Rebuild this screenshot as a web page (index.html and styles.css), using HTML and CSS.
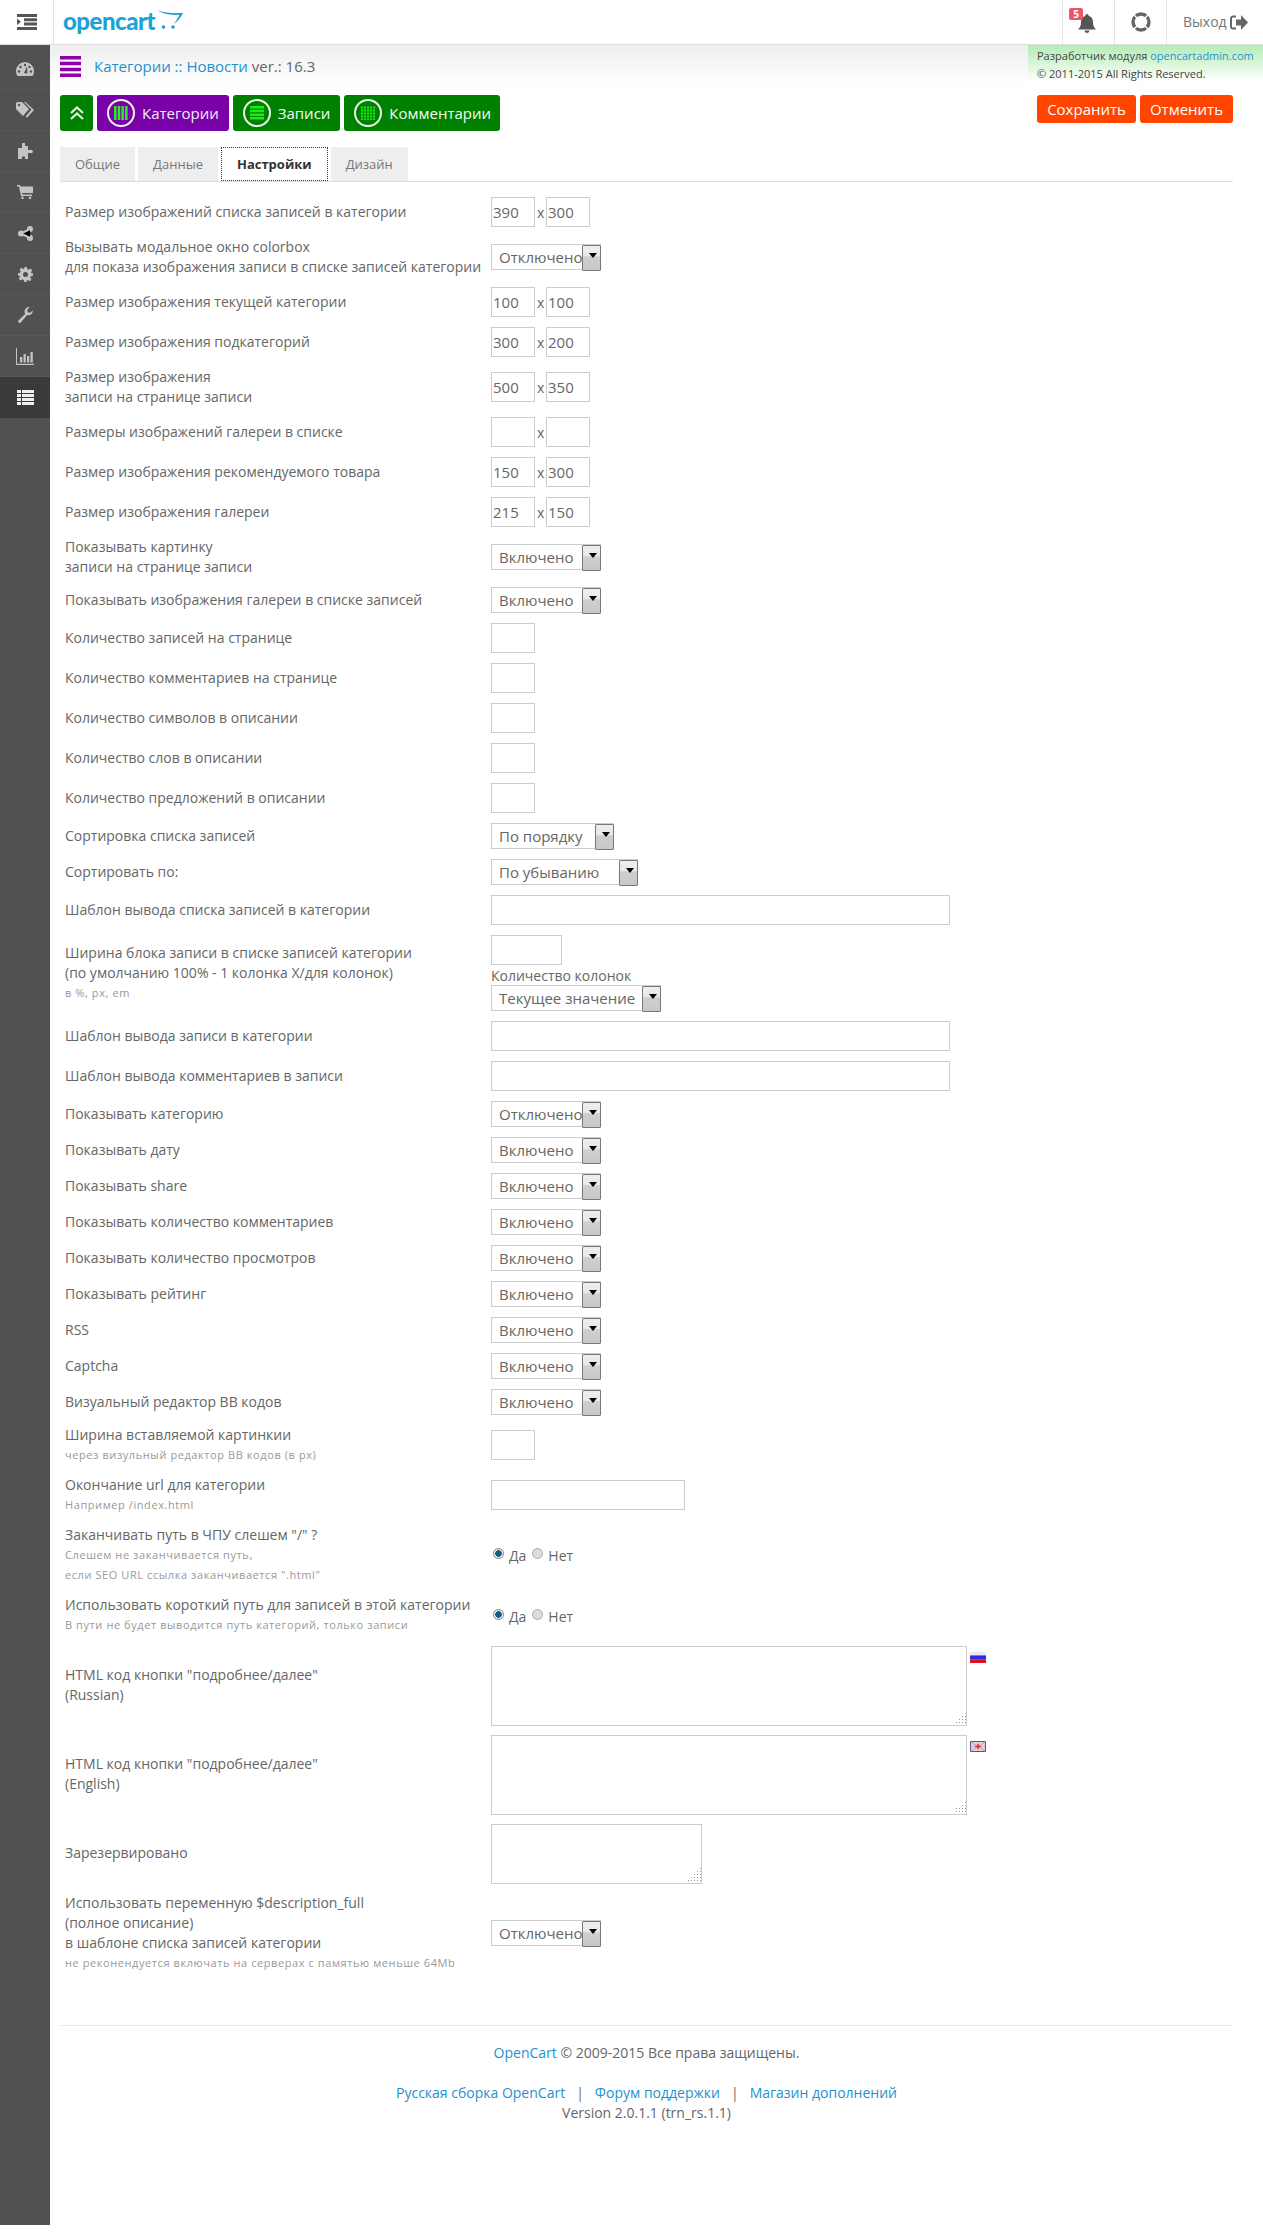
FILE: index.html
```html
<!DOCTYPE html>
<html lang="ru">
<head>
<meta charset="utf-8">
<title>Категории</title>
<link rel="stylesheet" href="styles.css">
</head>
<body>
<header class="topbar">
  <div class="burger">
    <svg width="20" height="16" viewBox="0 0 20 16"><path fill="#555" d="M0 0h20v3H0zM7 4.300h13v3H7zM7 8.600h13v3H7zM0 13h20v3H0zM0 4.500l4 3.300-4 3.300z"/></svg>
  </div>
  <div class="logo">
    <span class="logo-text">opencart</span>
    <svg class="logo-cart" width="26" height="20" viewBox="0 0 26 20"><path fill="#1b9fd1" d="M0 1c7 3 16 3.500 26 3-2 4-5 8-9 11 2-3 4-6 5.500-9.300C14 6.500 6 5 0 1z"/><circle cx="6.500" cy="18" r="1.800" fill="#1b9fd1"/><circle cx="16" cy="18" r="1.800" fill="#1b9fd1"/></svg>
  </div>
  <nav class="top-actions">
    <div class="top-item top-bell">
      <span class="badge">5</span>
      <svg width="18" height="19" viewBox="0 0 18 19"><path fill="#555" d="M9 0a1.600 1.600 0 0 1 1.600 1.700C13.500 2.500 15 5 15 8c0 4 1 5.500 3 7.500H0C2 13.500 3 12 3 8c0-3 1.500-5.500 4.400-6.300A1.600 1.600 0 0 1 9 0zM6.500 16.500h5a2.500 2.500 0 0 1-5 0z"/></svg>
    </div>
    <div class="top-item top-help">
      <svg width="20" height="20" viewBox="0 0 20 20"><circle cx="10" cy="10" r="8" fill="none" stroke="#666" stroke-width="3.400"/><path stroke="#fff" stroke-width="1.300" d="M2.800 2.800l4 4M17.200 2.800l-4 4M2.800 17.200l4-4M17.200 17.200l-4-4"/></svg>
    </div>
    <div class="top-item top-exit">
      <span>Выход</span>
      <svg width="18" height="15" viewBox="0 0 18 15"><path fill="none" stroke="#666" stroke-width="2" d="M6 1.500H3a2 2 0 0 0-2 2v8a2 2 0 0 0 2 2h3"/><path fill="#666" d="M11 0l7 7.500-7 7.500v-4.500H6v-6h5z"/></svg>
    </div>
  </nav>
</header>
<div class="layout">
  <aside class="sidebar">
    <div class="side-item"><svg width="18" height="14" viewBox="0 0 18 14"><path fill="currentColor" d="M9 0a9 9 0 0 1 9 9c0 2-.6 3.700-1.500 5h-15A8.800 8.800 0 0 1 0 9a9 9 0 0 1 9-9z"/><g fill="#515151"><circle cx="9" cy="3" r="1.200"/><circle cx="4.500" cy="5" r="1.200"/><circle cx="13.500" cy="5" r="1.200"/><circle cx="3" cy="9.500" r="1.200"/><circle cx="15" cy="9.500" r="1.200"/><path d="M8 11l3-6.500 .5 7z"/></g></svg></div>
    <div class="side-item"><svg width="18" height="16" viewBox="0 0 18 16"><path fill="currentColor" d="M0 1.500A1.500 1.500 0 0 1 1.500 0H6l7 7-6 7-7-7z"/><path fill="currentColor" d="M8 0l7.500 7.500-6 7 1.500 1.300L18 8 9.500 0z"/><circle cx="3" cy="3" r="1.200" fill="#515151"/></svg></div>
    <div class="side-item"><svg width="16" height="16" viewBox="0 0 16 16"><path fill="currentColor" d="M5 0h3v3h3v4h2a2 2 0 0 1 3 1.500A2 2 0 0 1 13 10h-2v6H8v-2a1.800 1.800 0 0 0-3 0v2H1V5h4z"/></svg></div>
    <div class="side-item"><svg width="16" height="14" viewBox="0 0 16 14"><path fill="currentColor" d="M0 0h3l.5 1.500H16V8H5l.4 1.500H15V11H4L2 1.500H0z"/><circle cx="5.500" cy="12.800" r="1.300" fill="currentColor"/><circle cx="13" cy="12.800" r="1.300" fill="currentColor"/></svg></div>
    <div class="side-item"><svg width="15" height="15" viewBox="0 0 15 15"><circle cx="12" cy="3" r="3" fill="currentColor"/><circle cx="3" cy="7.500" r="3" fill="currentColor"/><circle cx="12" cy="12" r="3" fill="currentColor"/><path stroke="currentColor" stroke-width="2" d="M12 3L3 7.500l9 4.500"/></svg></div>
    <div class="side-item"><svg width="15" height="15" viewBox="0 0 24 24"><path fill="currentColor" fill-rule="evenodd" d="M10 0h4l.7 3.300 2.300 1 2.900-1.800 2.800 2.800-1.800 2.900 1 2.300L24 10v4l-3.300.7-1 2.300 1.800 2.900-2.800 2.800-2.900-1.800-2.300 1L14 24h-4l-.7-3.300-2.300-1-2.900 1.800-2.800-2.800 1.800-2.900-1-2.300L0 14v-4l3.300-.7 1-2.300-1.800-2.900 2.800-2.800 2.900 1.800 2.300-1zM12 8a4 4 0 1 0 0 8 4 4 0 0 0 0-8z"/></svg></div>
    <div class="side-item"><svg width="15" height="16" viewBox="0 0 15 16"><path fill="currentColor" d="M14.800 3.500a4.300 4.300 0 0 1-5.600 4.500L2.800 15.400a1.500 1.500 0 0 1-2.300-2l6.800-6.600A4.300 4.300 0 0 1 11.700.2L9.200 2.800l.5 2.400 2.400.6z"/></svg></div>
    <div class="side-item"><svg width="18" height="17" viewBox="0 0 18 17"><path fill="currentColor" d="M0 0h1v15.800h17V17H0zM4 9h2.300v5.500H4zM7.500 6h2.300v8.500H7.500zM11 8h2.300v6.500H11zM14.500 4h2.300v10.500h-2.300z"/></svg></div>
    <div class="side-item side-item-active"><svg width="17" height="15" viewBox="0 0 17 15"><path fill="currentColor" d="M0 0h17v3H0zM0 4h17v3H0zM0 8h17v3H0zM0 12h17v3H0z"/><path stroke="#3a3a3a" d="M4.500 0v15"/></svg></div>
  </aside>
  <main class="content">
    <div class="page-head">
      <svg class="head-icon" width="21" height="21" viewBox="0 0 21 21"><path fill="#8f00a8" d="M0 0h21v3.500H0zM0 5.800h21v3.500H0zM0 11.700h21v3.500H0zM0 17.500h21V21H0z"/></svg>
      <h1 class="head-title"><a href="#">Категории :: Новости</a> ver.: 16.3</h1>
      <div class="dev-note">
        <div>Разработчик модуля <a href="#">opencartadmin.com</a></div>
        <div>© 2011-2015 All Rights Reserved.</div>
      </div>
    </div>
    <div class="toolbar">
      <div class="btn-group">
        <a class="btn btn-green btn-up" href="#"><svg width="14" height="14" viewBox="0 0 14 14"><path fill="none" stroke="#dff5df" stroke-width="2.200" d="M1 7l6-5.500L13 7M1 13l6-5.500L13 13"/></svg></a>
        <a class="btn btn-purple" href="#"><span class="disc"><svg width="14" height="14" viewBox="0 0 14 14"><path fill="#2dea2d" d="M0 0h2.500v14H0zM3.700 0h2.500v14H3.700zM7.400 0h2.500v14H7.400zM11.100 0h2.500v14h-2.500z"/></svg></span>Категории</a>
        <a class="btn btn-green" href="#"><span class="disc"><svg width="14" height="14" viewBox="0 0 14 14"><path fill="#14ee14" d="M0 0h14v2.500H0zM0 3.700h14v2.500H0zM0 7.400h14v2.500H0zM0 11.100h14v2.500H0z"/></svg></span>Записи</a>
        <a class="btn btn-green btn-last" href="#"><span class="disc"><svg width="14" height="14" viewBox="0 0 14 14"><path fill="none" stroke="#14ee14" stroke-width="2" stroke-dasharray="2 1" d="M0 1.500h14M0 4.500h14M0 7.500h14M0 10.500h14M0 13.500h14"/></svg></span>Комментарии</a>
      </div>
      <div class="btn-group">
        <a class="btn-save" href="#">Сохранить</a>
        <a class="btn-save" href="#">Отменить</a>
      </div>
    </div>
    <div class="tabs">
      <a class="tab" href="#">Общие</a>
      <a class="tab" href="#">Данные</a>
      <a class="tab tab-active" href="#">Настройки</a>
      <a class="tab" href="#">Дизайн</a>
    </div>
    <form class="settings">
      <div class="row"><div class="lbl">Размер изображений списка записей в категории</div><div class="val"><input class="num" value="390"><span class="by">x</span><input class="num" value="300"></div></div>
      <div class="row"><div class="lbl">Вызывать модальное окно colorbox<br>для показа изображения записи в списке записей категории</div><div class="val"><span class="sel sel-a"><select><option>Отключено</option></select></span></div></div>
      <div class="row"><div class="lbl">Размер изображения текущей категории</div><div class="val"><input class="num" value="100"><span class="by">x</span><input class="num" value="100"></div></div>
      <div class="row"><div class="lbl">Размер изображения подкатегорий</div><div class="val"><input class="num" value="300"><span class="by">x</span><input class="num" value="200"></div></div>
      <div class="row"><div class="lbl">Размер изображения<br>записи на странице записи</div><div class="val"><input class="num" value="500"><span class="by">x</span><input class="num" value="350"></div></div>
      <div class="row"><div class="lbl">Размеры изображений галереи в списке</div><div class="val"><input class="num"><span class="by">x</span><input class="num"></div></div>
      <div class="row"><div class="lbl">Размер изображения рекомендуемого товара</div><div class="val"><input class="num" value="150"><span class="by">x</span><input class="num" value="300"></div></div>
      <div class="row"><div class="lbl">Размер изображения галереи</div><div class="val"><input class="num" value="215"><span class="by">x</span><input class="num" value="150"></div></div>
      <div class="row"><div class="lbl">Показывать картинку<br>записи на странице записи</div><div class="val"><span class="sel sel-a"><select><option>Включено</option></select></span></div></div>
      <div class="row"><div class="lbl">Показывать изображения галереи в списке записей</div><div class="val"><span class="sel sel-a"><select><option>Включено</option></select></span></div></div>
      <div class="row"><div class="lbl">Количество записей на странице</div><div class="val"><input class="num"></div></div>
      <div class="row"><div class="lbl">Количество комментариев на странице</div><div class="val"><input class="num"></div></div>
      <div class="row"><div class="lbl">Количество символов в описании</div><div class="val"><input class="num"></div></div>
      <div class="row"><div class="lbl">Количество слов в описании</div><div class="val"><input class="num"></div></div>
      <div class="row"><div class="lbl">Количество предложений в описании</div><div class="val"><input class="num"></div></div>
      <div class="row"><div class="lbl">Сортировка списка записей</div><div class="val"><span class="sel sel-b"><select><option>По порядку</option></select></span></div></div>
      <div class="row"><div class="lbl">Сортировать по:</div><div class="val"><span class="sel sel-c"><select><option>По убыванию</option></select></span></div></div>
      <div class="row"><div class="lbl">Шаблон вывода списка записей в категории</div><div class="val"><input class="wide"></div></div>
      <div class="row"><div class="lbl">Ширина блока записи в списке записей категории<br>(по умолчанию 100% - 1 колонка Х/для колонок)<div class="hint">в %, px, em</div></div><div class="val val-stack"><input class="mid"><div class="cols-label">Количество колонок</div><span class="sel sel-d"><select><option>Текущее значение</option></select></span></div></div>
      <div class="row"><div class="lbl">Шаблон вывода записи в категории</div><div class="val"><input class="wide"></div></div>
      <div class="row"><div class="lbl">Шаблон вывода комментариев в записи</div><div class="val"><input class="wide"></div></div>
      <div class="row"><div class="lbl">Показывать категорию</div><div class="val"><span class="sel sel-a"><select><option>Отключено</option></select></span></div></div>
      <div class="row"><div class="lbl">Показывать дату</div><div class="val"><span class="sel sel-a"><select><option>Включено</option></select></span></div></div>
      <div class="row"><div class="lbl">Показывать share</div><div class="val"><span class="sel sel-a"><select><option>Включено</option></select></span></div></div>
      <div class="row"><div class="lbl">Показывать количество комментариев</div><div class="val"><span class="sel sel-a"><select><option>Включено</option></select></span></div></div>
      <div class="row"><div class="lbl">Показывать количество просмотров</div><div class="val"><span class="sel sel-a"><select><option>Включено</option></select></span></div></div>
      <div class="row"><div class="lbl">Показывать рейтинг</div><div class="val"><span class="sel sel-a"><select><option>Включено</option></select></span></div></div>
      <div class="row"><div class="lbl">RSS</div><div class="val"><span class="sel sel-a"><select><option>Включено</option></select></span></div></div>
      <div class="row"><div class="lbl">Captcha</div><div class="val"><span class="sel sel-a"><select><option>Включено</option></select></span></div></div>
      <div class="row"><div class="lbl">Визуальный редактор BB кодов</div><div class="val"><span class="sel sel-a"><select><option>Включено</option></select></span></div></div>
      <div class="row"><div class="lbl">Ширина вставляемой картинкии<div class="hint">через визульный редактор BB кодов (в px)</div></div><div class="val"><input class="num"></div></div>
      <div class="row"><div class="lbl">Окончание url для категории<div class="hint">Например /index.html</div></div><div class="val"><input class="url"></div></div>
      <div class="row"><div class="lbl">Заканчивать путь в ЧПУ слешем "/" ?<div class="hint">Слешем не заканчивается путь,<br>если SEO URL ссылка заканчивается ".html"</div></div><div class="val"><label class="radio"><span class="dot dot-on"></span>Да</label><label class="radio"><span class="dot"></span>Нет</label></div></div>
      <div class="row row-tall"><div class="lbl">Использовать короткий путь для записей в этой категории<div class="hint">В пути не будет выводится путь категорий, только записи</div></div><div class="val"><label class="radio"><span class="dot dot-on"></span>Да</label><label class="radio"><span class="dot"></span>Нет</label></div></div>
      <div class="row row-area"><div class="lbl">HTML код кнопки "подробнее/далее"<br>(Russian)</div><div class="val val-top"><textarea class="area"></textarea>
        <svg class="flag" width="16" height="11" viewBox="0 0 16 11"><path fill="#e8e8f4" d="M0 0h16v3.400H0z"/><path fill="#2c2cd8" d="M0 3.400h16v3.800H0z"/><path fill="#e01020" d="M0 7.200h16V11H0z"/></svg></div></div>
      <div class="row row-area"><div class="lbl">HTML код кнопки "подробнее/далее"<br>(English)</div><div class="val val-top"><textarea class="area"></textarea>
        <svg class="flag" width="16" height="11" viewBox="0 0 16 11"><path fill="#d8d8ec" stroke="#55558c" d="M.5.500h15v10H.5z"/><path stroke="#b8a0c8" d="M1 1l14 9M15 1L1 10"/><path stroke="#f4b8b8" stroke-width="2" d="M8 1v9M1 5.500h14"/><path stroke="#e83030" stroke-width="1.600" d="M8 3v5M5 5.500h6"/></svg></div></div>
      <div class="row row-area"><div class="lbl">Зарезервировано</div><div class="val val-top"><textarea class="area area-small"></textarea></div></div>
      <div class="row"><div class="lbl">Использовать переменную $description_full<br>(полное описание)<br>в шаблоне списка записей категории<div class="hint">не реконендуется включать на серверах с памятью меньше 64Mb</div></div><div class="val"><span class="sel sel-a"><select><option>Отключено</option></select></span></div></div>
    </form>
    <footer class="foot">
      <p class="foot-copy"><a href="#">OpenCart</a> © 2009-2015 Все права защищены.</p>
      <p class="foot-links"><a href="#">Русская сборка OpenCart</a><span class="pipe">|</span><a href="#">Форум поддержки</a><span class="pipe">|</span><a href="#">Магазин дополнений</a></p>
      <p class="foot-ver">Version 2.0.1.1 (trn_rs.1.1)</p>
    </footer>
  </main>
</div>
</body>
</html>
```
FILE: styles.css
```css
* { box-sizing: border-box; }
html, body { margin: 0; padding: 0; }
body { font-family: "Open Sans", sans-serif; font-size: 14px; line-height: 20px; color: #666; background: #fff; height: 2240px; }
a { color: #1e91cf; text-decoration: none; }
.topbar { display: flex; height: 45px; border-bottom: 1px solid #ddd; background: #fff; }
.burger { width: 54px; display: flex; align-items: center; justify-content: center; border-right: 1px solid #e4e4e4; }
.logo { display: flex; align-items: center; padding-left: 9px; width: 200px; }
.logo-text { font-family: "Lato", sans-serif; font-weight: 900; font-size: 24px; color: #1ba3d6; letter-spacing: -.5px; line-height: 24px; margin-top: -3px; }
.logo-cart { margin: -6px 0 0 2px; }
.top-actions { margin-left: auto; display: flex; height: 44px; }
.top-item { position: relative; display: flex; align-items: center; justify-content: center; border-left: 1px solid #e4e4e4; height: 44px; }
.top-bell { width: 52px; }
.top-help { width: 52px; }
.top-exit { width: 97px; gap: 3px; color: #777; justify-content: flex-start; padding-left: 16px; }
.badge { position: absolute; left: 6px; top: 8px; width: 14px; height: 12px; border-radius: 2px; background: #ec5766; color: #fff; font-size: 10px; font-weight: 700; line-height: 12px; text-align: center; }
.top-bell svg { margin: 2px 3px 0 0; }
.layout { display: flex; }
.sidebar { width: 50px; height: 2180px; background: #515151; padding-top: 4px; flex: none; }
.side-item { height: 41px; display: flex; align-items: center; justify-content: center; color: #c4c4c4; border-bottom: 1px solid #585858; }
.side-item-active { background: #3a3a3a; color: #f0f0f0; border-bottom: 0; }
.content { flex: 1; min-width: 0; padding: 0 30px 0 10px; position: relative; }
.page-head { display: flex; align-items: flex-start; height: 50px; margin: 0 -30px 0 -10px; padding: 11px 30px 0 10px; background: linear-gradient(#eee, #fff 80%); position: relative; }
.head-icon { flex: none; }
.head-title { margin: 0 0 0 13px; font-size: 15px; font-weight: 400; line-height: 20px; color: #666; }
.dev-note { position: absolute; right: 0; top: 0; width: 235px; height: 37px; padding: 2px 0 0 9px; font-size: 11px; line-height: 18px; color: #444; background: linear-gradient(#b4ecb4, #fff); }
.toolbar { display: flex; justify-content: space-between; align-items: flex-start; }
.btn-group { display: flex; gap: 4px; }
.btn { display: flex; align-items: center; height: 36px; padding: 0 10px; border-radius: 3px; color: #fff; font-size: 15px; white-space: nowrap; }
.btn-green { background: #008000; color: #f0fff0; }
.btn-purple { background: #7a00a8; color: #f6ecfa; }
.btn-up { width: 33px; padding: 0; justify-content: center; }
.btn-last { padding-right: 9px; }
.disc { display: flex; align-items: center; justify-content: center; width: 28px; height: 28px; border: 2px solid #e8f6e8; border-radius: 50%; margin-right: 7px; flex: none; }
.btn-save { display: flex; align-items: center; height: 28px; padding: 0 10px; border-radius: 3px; background: #ff4500; color: #fff; font-size: 15px; }
.tabs { display: flex; gap: 3px; margin-top: 16px; height: 35px; border-bottom: 1px solid #ddd; }
.tab { display: flex; align-items: center; justify-content: center; height: 34px; padding: 0 15px; background: #eee; color: #777; font-size: 13px; }
.tab-active { background: #fff; color: #333; font-weight: 700; border: 1px dotted #333; }
.settings { padding-top: 10px; }
.row { display: flex; align-items: center; padding: 5px 0; }
.lbl { width: 431px; flex: none; padding-left: 5px; line-height: 20px; }
.val { display: flex; align-items: center; flex-wrap: nowrap; }
.val-stack { display: block; }
.val-top { align-items: flex-start; }
.hint { font-size: 11px; color: #999; line-height: 20px; letter-spacing: .58px; }
input, textarea { font-family: "Open Sans", sans-serif; color: #666; background: #fff; border: 1px solid #ccc; border-radius: 0; display: block; margin: 0; outline: 0; }
input { height: 30px; padding: 0 1px; font-size: 15px; }
.num { width: 44px; }
.mid { width: 71px; }
.url { width: 194px; }
.wide { width: 459px; }
.by { width: 11px; padding-left: 2px; font-size: 14px; padding-top: 2px; }
.cols-label { height: 20px; line-height: 22px; }
.sel { position: relative; display: block; height: 26px; }
.sel select { display: block; width: 100%; height: 26px; padding: 0 0 0 7px; border: 1px solid #ccc; background: #fff; color: #666; font-family: "Open Sans", sans-serif; font-size: 15px; border-radius: 0; appearance: none; -webkit-appearance: none; outline: 0; }
.sel::after { content: ""; position: absolute; right: 0; top: 1px; width: 17px; height: 24px; border: 1px solid #777; border-radius: 1px; background: linear-gradient(#eee 0, #e8e8e8 40%, #cfcfcf 45%, #c8c8c8); }
.sel::before { content: ""; position: absolute; z-index: 1; right: 4px; top: 9px; border-top: 5px solid #000; border-left: 4.500px solid transparent; border-right: 4.500px solid transparent; }
.sel-a { width: 110px; }
.sel-b { width: 123px; }
.sel-c { width: 147px; }
.sel-d { width: 170px; }
.radio { display: flex; align-items: center; margin-right: 5px; font-size: 14px; padding-top: 2px; }
.row-tall .radio { padding-top: 4px; }
.dot { display: block; width: 11px; height: 11px; border-radius: 50%; background: #ddd; border: 1px solid #aaa; margin: -5px 5px 0 1px; }
.dot-on { background: radial-gradient(circle, #0d5f86 0 3px, #e8e8e8 3.500px); border-color: #888; }
.radio:first-child .dot { margin-left: 2px; }
.row-tall { padding-bottom: 6px; }
.row-area { padding: 5px 0 4px; }
.row-area .lbl { margin-bottom: 2px; }
.area { width: 476px; height: 80px; border: 1px solid #ccc; flex: none; resize: both; }
.area::-webkit-resizer { background-image: repeating-linear-gradient(90deg, #fff 0 2px, transparent 2px 3px), repeating-linear-gradient(0deg, #fff 0 2px, transparent 2px 3px), linear-gradient(135deg, #fff 50%, #999 50%); }
.area-small { width: 211px; height: 60px; }
.flag { display: block; margin: 6px 0 0 3px; flex: none; }
.foot { margin-top: 47px; border-top: 1px solid #e8e8e8; text-align: center; }
.foot p { margin: 0; line-height: 20px; }
.foot-copy { padding-top: 17px; }
.foot-links { padding-top: 20px; }
.pipe { margin: 0 11px; }
```
